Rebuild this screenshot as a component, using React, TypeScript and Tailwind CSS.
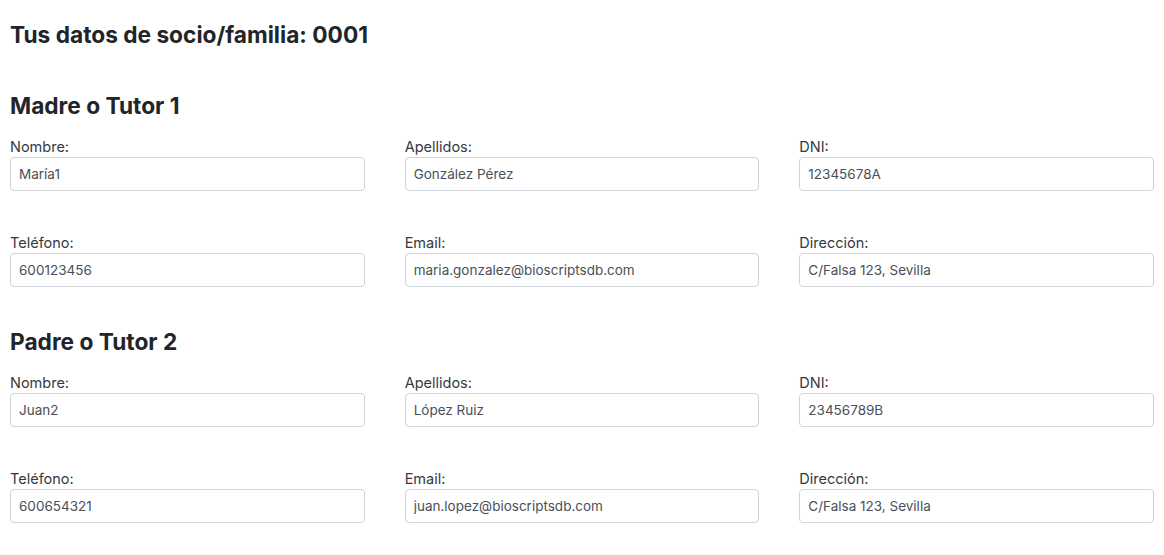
import React from 'react';

type Field = { label: string; value: string };

const sections: { title: string; fields: Field[] }[] = [
  {
    title: 'Madre o Tutor 1',
    fields: [
      { label: 'Nombre:', value: 'María1' },
      { label: 'Apellidos:', value: 'González Pérez' },
      { label: 'DNI:', value: '12345678A' },
      { label: 'Teléfono:', value: '600123456' },
      { label: 'Email:', value: 'maria.gonzalez@bioscriptsdb.com' },
      { label: 'Dirección:', value: 'C/Falsa 123, Sevilla' },
    ],
  },
  {
    title: 'Padre o Tutor 2',
    fields: [
      { label: 'Nombre:', value: 'Juan2' },
      { label: 'Apellidos:', value: 'López Ruiz' },
      { label: 'DNI:', value: '23456789B' },
      { label: 'Teléfono:', value: '600654321' },
      { label: 'Email:', value: 'juan.lopez@bioscriptsdb.com' },
      { label: 'Dirección:', value: 'C/Falsa 123, Sevilla' },
    ],
  },
];

const FormField: React.FC<Field> = ({ label, value }) => (
  <div className="flex flex-col">
    <label className="text-[14.5px] leading-[18px] mb-px text-[#343a40]">{label}</label>
    <input
      readOnly
      value={value}
      className="h-[34px] w-full rounded-[4px] border border-[#ced4da] bg-white px-2 text-[13.5px] text-[#495057] outline-none"
    />
  </div>
);

export default function App() {
  return (
    <div className="min-h-screen bg-white px-[10px] pt-[21px] text-[#212529] font-['Inter',sans-serif]">
      <h2 className="text-[22.7px] leading-[28px] font-bold">Tus datos de socio/familia: 0001</h2>

      {sections.map((s, i) => (
        <div key={s.title} className={i === 0 ? 'mt-[43px]' : 'mt-[41px]'}>
          <h3 className="text-[22.7px] leading-[28px] font-bold">{s.title}</h3>
          <div className="mt-[18px] grid grid-cols-3 gap-x-10 gap-y-[43px]">
            {s.fields.map(f => (
              <FormField key={f.label} {...f} />
            ))}
          </div>
        </div>
      ))}
    </div>
  );
}
